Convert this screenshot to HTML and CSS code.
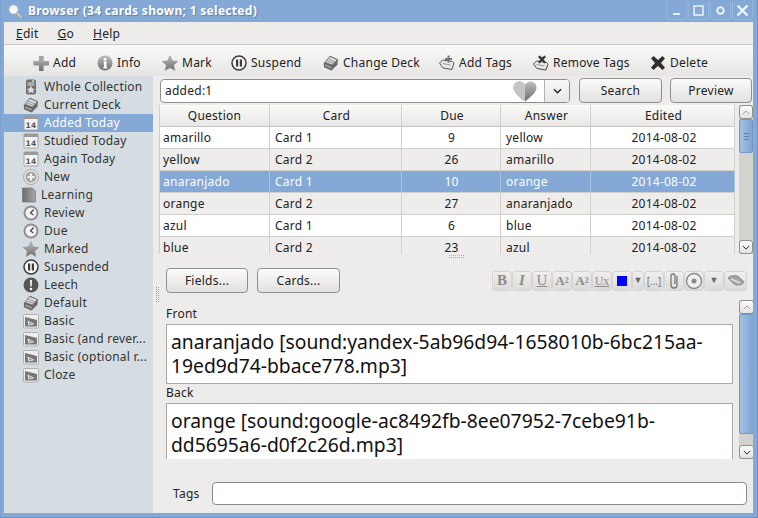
FILE: index.html
```html
<!DOCTYPE html>
<html lang="en">
<head>
<meta charset="utf-8">
<title>Browser</title>
<link rel="stylesheet" href="styles.css">
</head>
<body>
<svg class="defs" width="0" height="0">
  <defs>
    <linearGradient id="g1" x1="0" y1="0" x2="0" y2="1"><stop offset="0" stop-color="#bdbdbd"/><stop offset="1" stop-color="#6f6f6f"/></linearGradient>
    <linearGradient id="g2" x1="0" y1="0" x2="1" y2="0"><stop offset="0" stop-color="#6e6e6e"/><stop offset="1" stop-color="#a8a8a8"/></linearGradient>
    <symbol id="i-add" viewBox="0 0 16 16"><path d="M6 1h4.500v5H16v4.500h-5.500V16H6v-5.500H.5V6H6z" fill="url(#g1)"/><path d="M.5 6H6V1h4.500v5H16v1.500H.5z" fill="#a5a5a5"/></symbol>
    <symbol id="i-info" viewBox="0 0 16 16"><circle cx="8" cy="8" r="7.500" fill="url(#g1)"/><circle cx="8" cy="4.300" r="1.500" fill="#fff"/><path d="M6.500 6.500h3v6h1v1h-4.500v-1h1v-5h-.5z" fill="#fff"/></symbol>
    <symbol id="i-star" viewBox="0 0 16 16"><path d="M8 .8l2.300 5 5.500.6-4.100 3.700 1.200 5.400L8 12.700l-4.900 2.800 1.200-5.400L.2 6.400l5.500-.6z" fill="url(#g1)" stroke="#8c8c8c" stroke-width=".5"/></symbol>
    <symbol id="i-pause" viewBox="0 0 16 16"><circle cx="8" cy="8" r="7" fill="#f4f4f4" stroke="#3c3c3c" stroke-width="1.500"/><path d="M5 4.500h2.200v7H5zM8.800 4.500H11v7H8.800z" fill="#3c3c3c"/></symbol>
    <symbol id="i-deck" viewBox="0 0 16 16"><path d="M7 .8l8 3.600-.6 5.400-6 5.600L1 12.200.8 8.500z" fill="#6a6a6a"/><path d="M7 1.500l7.500 3.200-5.200 5.400L1.800 7.200z" fill="#dcdcdc" stroke="#555" stroke-width=".6"/><path d="M1.800 8.500l7.500 3v3L1.500 11.500z" fill="#9a9a9a" stroke="#444" stroke-width=".5"/><path d="M4 6l7 2.500M5.500 4.300l7 2.700" stroke="#777" stroke-width=".7"/></symbol>
    <symbol id="i-addtag" viewBox="0 0 16 16"><path d="M.5 8l3-3 10 1.500 1.500 1.500-2 6.500-9-1.500z" fill="#e8e8e8" stroke="#5a5a5a"/><path d="M3.500 8.500l8 1.500" stroke="#9a9a9a"/><path d="M8.500 .5h2V3H13v2h-2.500v2.500h-2V5H6V3h2.500z" fill="#777"/></symbol>
    <symbol id="i-remtag" viewBox="0 0 16 16"><path d="M.5 9l3-3 10 1.500 1.500 1.500-2 6-9-1.500z" fill="#e8e8e8" stroke="#4a4a4a"/><path d="M3.500 9.500l8 1.500" stroke="#9a9a9a"/><path d="M6.500 0.500l2.500 2 2.500-2 1.500 1.500-2.500 2.500 2.500 2.500-1.500 1.500-2.500-2.500-2.500 2.500-1.500-1.500L7.500 4.500 5 2z" fill="#333"/></symbol>
    <symbol id="i-delete" viewBox="0 0 16 16"><path d="M1 3.500L3.500 1 8 5l4.500-4L15 3.500 11 8l4 4.500-2.500 2.500L8 11l-4.500 4L1 12.500 5 8z" fill="#2f2f2f"/></symbol>
    <symbol id="i-heart" viewBox="0 0 24 21"><path d="M12 20.500C6 15.500.5 11.500.5 6.500.5 2.800 3.200.5 6.500.5 9 .5 11 1.800 12 4c1-2.200 3-3.500 5.500-3.500 3.300 0 6 2.300 6 6 0 5-5.500 9-11.500 14z" fill="url(#g1)"/><path d="M12 20.500C6 15.500.5 11.500.5 6.500.5 2.800 3.200.5 6.500.5 9 .5 11 1.800 12 4z" fill="#c4c4c4"/></symbol>
    <symbol id="i-coll" viewBox="0 0 16 16"><rect x="3" y="0.500" width="10" height="15" rx="2" fill="#6f6f6f"/><rect x="4.500" y="3" width="7" height="4" fill="#aaa"/><path d="M8 7l1.500 2.500 2.500.4-1.800 1.800.5 2.600L8 13l-2.700 1.300.5-2.600L4 9.900l2.500-.4z" fill="#ddd"/><circle cx="10" cy="2" r="1" fill="#ddd"/></symbol>
    <symbol id="i-cal" viewBox="0 0 16 16"><rect x="1" y="1" width="14" height="14" rx="1" fill="#f3f3f3" stroke="#a0a0a0"/><rect x="1" y="1" width="14" height="3" fill="#9a9a9a"/><text x="8" y="12.800" class="caltext" text-anchor="middle">14</text></symbol>
    <symbol id="i-new" viewBox="0 0 16 16"><circle cx="8" cy="8" r="7.500" fill="#e6e6e6" stroke="#aaa"/><circle cx="8" cy="8" r="5.500" fill="#a8a8a8"/><path d="M7 4.500h2V7h2.500v2H9v2.500H7V9H4.500V7H7z" fill="#f4f4f4"/></symbol>
    <symbol id="i-learn" viewBox="0 0 14 16"><path d="M.5 1h10l3 3v11H.5z" fill="url(#g2)" stroke="#6a6a6a" stroke-width=".6"/></symbol>
    <symbol id="i-clock" viewBox="0 0 16 16"><circle cx="8" cy="8" r="7.500" fill="#8f8f8f"/><circle cx="8" cy="8" r="5.500" fill="#f2f2f2"/><path d="M10.500 4.500L7.500 8l3 2" fill="none" stroke="#444" stroke-width="1.200"/></symbol>
    <symbol id="i-leech" viewBox="0 0 16 16"><circle cx="8" cy="8" r="7.500" fill="#555"/><path d="M7 3h2l-.3 6.500H7.300z" fill="#f5f5f5"/><circle cx="8" cy="12" r="1.300" fill="#f5f5f5"/></symbol>
    <symbol id="i-note" viewBox="0 0 16 16"><rect x="0.500" y="1.500" width="15" height="13.500" rx="1" fill="#eee" stroke="#b0b0b0"/><path d="M2 4l12 3v6.500H2z" fill="#777"/><path d="M4.500 7.500l7 3.500-6 1.500z" fill="#eee"/><path d="M6 9.300l3 1.500-2.500.6z" fill="#777"/></symbol>
    <symbol id="i-clip" viewBox="0 0 20 20"><path d="M13 5v9a3 3 0 0 1-6 0V5a2 2 0 0 1 4 0v8" fill="none" stroke="#777" stroke-width="1.300"/></symbol>
    <symbol id="i-rec" viewBox="0 0 20 20"><circle cx="10" cy="10" r="7.500" fill="#f0f0f0" stroke="#8a8a8a" stroke-width="1.400"/><circle cx="10" cy="10" r="2.500" fill="#8a8a8a"/></symbol>
    <symbol id="i-chem" viewBox="0 0 20 20"><path d="M2 7c3-3 8-3 11-1l5 5c-1 3-6 4-10 2z" fill="#a5a5a5" stroke="#8a8a8a"/><path d="M5 8l9 4" stroke="#e0e0e0" stroke-width="1.500"/></symbol>
  </defs>
</svg>

<div class="window">
  <header class="titlebar">
    <svg class="title-icon" viewBox="0 0 14 14"><circle cx="5.500" cy="5.500" r="4.500" fill="#f4f6f8" stroke="#b9c2cc"/><path d="M9 9l4.500 4.500" stroke="#e7c27a" stroke-width="2"/></svg>
    <span class="title-text">Browser (34 cards shown; 1 selected)</span>
    <div class="wm-buttons">
      <span class="wm-btn"><svg viewBox="0 0 21 21"><rect x="7" y="13" width="7" height="2" fill="#e8eef6"/></svg></span>
      <span class="wm-btn"><svg viewBox="0 0 21 21"><rect x="6" y="6" width="9" height="9" fill="none" stroke="#eef3f9" stroke-width="1.500"/></svg></span>
      <span class="wm-btn"><svg viewBox="0 0 21 21"><circle cx="10.500" cy="10.500" r="3.300" fill="none" stroke="#eef3f9" stroke-width="2"/></svg></span>
      <span class="wm-btn"><svg viewBox="0 0 21 21"><path d="M5.500 5.500l10 10M15.500 5.500l-10 10" stroke="#f2f5fa" stroke-width="2.400"/></svg></span>
    </div>
  </header>

  <nav class="menubar">
    <span class="menu"><u>E</u>dit</span>
    <span class="menu"><u>G</u>o</span>
    <span class="menu"><u>H</u>elp</span>
  </nav>

  <div class="toolbar">
    <span class="tool tool-add"><svg class="ico"><use href="#i-add"/></svg>Add</span>
    <span class="tool tool-info"><svg class="ico"><use href="#i-info"/></svg>Info</span>
    <span class="tool tool-mark"><svg class="ico"><use href="#i-star"/></svg>Mark</span>
    <span class="tool tool-susp"><svg class="ico"><use href="#i-pause"/></svg>Suspend</span>
    <span class="tool tool-deck"><svg class="ico"><use href="#i-deck"/></svg>Change Deck</span>
    <span class="tool tool-addt"><svg class="ico"><use href="#i-addtag"/></svg>Add Tags</span>
    <span class="tool tool-remt"><svg class="ico"><use href="#i-remtag"/></svg>Remove Tags</span>
    <span class="tool tool-del"><svg class="ico"><use href="#i-delete"/></svg>Delete</span>
  </div>

  <div class="content">
    <aside class="sidebar">
      <div class="side-item"><svg class="ico"><use href="#i-coll"/></svg>Whole Collection</div>
      <div class="side-item"><svg class="ico"><use href="#i-deck"/></svg>Current Deck</div>
      <div class="side-item is-selected"><svg class="ico"><use href="#i-cal"/></svg>Added Today</div>
      <div class="side-item"><svg class="ico"><use href="#i-cal"/></svg>Studied Today</div>
      <div class="side-item"><svg class="ico"><use href="#i-cal"/></svg>Again Today</div>
      <div class="side-item"><svg class="ico"><use href="#i-new"/></svg>New</div>
      <div class="side-item side-narrow"><svg class="ico ico-narrow"><use href="#i-learn"/></svg>Learning</div>
      <div class="side-item"><svg class="ico"><use href="#i-clock"/></svg>Review</div>
      <div class="side-item"><svg class="ico"><use href="#i-clock"/></svg>Due</div>
      <div class="side-item"><svg class="ico"><use href="#i-star"/></svg>Marked</div>
      <div class="side-item"><svg class="ico"><use href="#i-pause"/></svg>Suspended</div>
      <div class="side-item"><svg class="ico"><use href="#i-leech"/></svg>Leech</div>
      <div class="side-item"><svg class="ico"><use href="#i-deck"/></svg>Default</div>
      <div class="side-item"><svg class="ico"><use href="#i-note"/></svg>Basic</div>
      <div class="side-item"><svg class="ico"><use href="#i-note"/></svg>Basic (and rever...</div>
      <div class="side-item"><svg class="ico"><use href="#i-note"/></svg>Basic (optional r...</div>
      <div class="side-item"><svg class="ico"><use href="#i-note"/></svg>Cloze</div>
    </aside>

    <main class="main">
      <div class="grip-v"></div>
      <div class="search-row">
        <div class="combo">
          <span class="combo-text">added:1</span>
          <svg class="heart"><use href="#i-heart"/></svg>
          <span class="combo-arrow"><svg viewBox="0 0 10 6" class="chev"><path d="M1 1l4 4 4-4" fill="none" stroke="#222" stroke-width="1.500"/></svg></span>
        </div>
        <button class="btn btn-search">Search</button>
        <button class="btn btn-preview">Preview</button>
      </div>

      <div class="table-wrap">
        <div class="table">
          <div class="row head"><span>Question</span><span>Card</span><span>Due</span><span>Answer</span><span>Edited</span></div>
          <div class="row"><span>amarillo</span><span>Card 1</span><span>9</span><span>yellow</span><span>2014-08-02</span></div>
          <div class="row alt"><span>yellow</span><span>Card 2</span><span>26</span><span>amarillo</span><span>2014-08-02</span></div>
          <div class="row sel"><span>anaranjado</span><span>Card 1</span><span>10</span><span>orange</span><span>2014-08-02</span></div>
          <div class="row alt"><span>orange</span><span>Card 2</span><span>27</span><span>anaranjado</span><span>2014-08-02</span></div>
          <div class="row"><span>azul</span><span>Card 1</span><span>6</span><span>blue</span><span>2014-08-02</span></div>
          <div class="row alt"><span>blue</span><span>Card 2</span><span>23</span><span>azul</span><span>2014-08-02</span></div>
        </div>
        <div class="scrollbar sb-table">
          <span class="sb-btn"><svg viewBox="0 0 10 6" class="sb-chev"><path d="M1 5l4-4 4 4" fill="none" stroke="#9a9a9a" stroke-width="1.200"/></svg></span>
          <span class="thumb thumb-table"><i></i><i></i><i></i></span>
          <span class="sb-track"></span>
          <span class="sb-btn"><svg viewBox="0 0 10 6" class="sb-chev"><path d="M1 1l4 4 4-4" fill="none" stroke="#222" stroke-width="1.200"/></svg></span>
        </div>
      </div>

      <div class="grip-h"><i></i></div>

      <div class="buttons-row">
        <button class="btn btn-fields">Fields...</button>
        <button class="btn btn-cards">Cards...</button>
        <div class="edit-tools">
          <span class="et et-b">B</span>
          <span class="et et-i">I</span>
          <span class="et et-u">U</span>
          <span class="et et-s">A<sup>2</sup></span>
          <span class="et et-s">A<sub>2</sub></span>
          <span class="et et-ux"><u>Ux</u></span>
          <span class="et"><b class="swatch"></b></span>
          <span class="et et-arrow">▼</span>
          <span class="et et-cl">[...]</span>
          <span class="et"><svg class="et-ico"><use href="#i-clip"/></svg></span>
          <span class="et"><svg class="et-ico"><use href="#i-rec"/></svg></span>
          <span class="et et-arrow2">▼</span>
          <span class="et et-last"><svg class="et-ico"><use href="#i-chem"/></svg></span>
        </div>
      </div>

      <div class="editor">
        <div class="fields">
          <div class="field-label">Front</div>
          <div class="field-box">anaranjado [sound:yandex-5ab96d94-1658010b-6bc215aa-19ed9d74-bbace778.mp3]</div>
          <div class="field-label back-label">Back</div>
          <div class="field-box">orange [sound:google-ac8492fb-8ee07952-7cebe91b-dd5695a6-d0f2c26d.mp3]</div>
        </div>
        <div class="scrollbar sb-editor">
          <span class="sb-btn"><svg viewBox="0 0 10 6" class="sb-chev"><path d="M1 5l4-4 4 4" fill="none" stroke="#9a9a9a" stroke-width="1.200"/></svg></span>
          <span class="thumb thumb-editor"><i></i><i></i><i></i></span>
          <span class="sb-track"></span>
          <span class="sb-btn"><svg viewBox="0 0 10 6" class="sb-chev"><path d="M1 1l4 4 4-4" fill="none" stroke="#222" stroke-width="1.200"/></svg></span>
        </div>
      </div>

      <div class="tags-row">
        <span class="tags-label">Tags</span>
        <span class="tags-input"></span>
      </div>
    </main>
  </div>
</div>
</body>
</html>
```

FILE: styles.css
```css
* { box-sizing: border-box; }
html, body { margin: 0; padding: 0; }
body { width: 758px; height: 518px; overflow: hidden; font: 12px/16px "Noto Sans", sans-serif; letter-spacing: .25px; color: #222; background: #84a9d6; }
.defs { position: absolute; }
.caltext { font: bold 7.500px "DejaVu Sans", sans-serif; fill: #555; }

.window { width: 758px; height: 518px; display: flex; flex-direction: column; background: #84a9d6; padding: 0 4px 4px; border: 1px solid #6f93c0; border-top: 0; border-left-color: #7ea2cf; }
.titlebar { height: 22px; flex: none; display: flex; align-items: center; margin: 0 -3px; padding-left: 6px; }
.title-icon { width: 14px; height: 14px; flex: none; }
.title-text { margin-left: 6px; color: #fff; font-weight: bold; text-shadow: 1px 1px 1px #5f7fa8; letter-spacing: .3px; }
.wm-buttons { margin-left: auto; margin-right: 3px; display: flex; gap: 1px; }
.wm-btn { width: 21px; height: 18px; border: 1px solid #94b5dd; border-top: 0; border-radius: 0 0 3px 3px; display: flex; align-items: center; justify-content: center; }
.wm-btn svg { width: 21px; height: 21px; flex: none; }

.menubar { height: 23px; flex: none; display: flex; align-items: center; gap: 19px; padding: 1px 0 0 12px; margin-left: -1px; background: #edecea; border-bottom: 1px solid #cbcac6; }
.toolbar { height: 31px; flex: none; display: flex; align-items: center; padding: 4px 0 0 29px; margin-left: -1px; background: linear-gradient(#fafaf9, #e6e5e3); }
.tool { display: flex; align-items: center; gap: 4px; width: 64px; }
.tool-info { width: 65px; }
.tool-mark { width: 69px; }
.tool-susp { width: 92px; }
.tool-deck { width: 116px; }
.tool-addt { width: 94px; }
.tool-remt { width: 117px; }
.ico { width: 16px; height: 16px; flex: none; }

.content { flex: 1; min-height: 0; display: flex; margin-left: -1px; }
.sidebar { width: 149px; flex: none; background: #d6dde2; padding-top: 2px; }
.side-item { height: 18px; display: flex; align-items: center; gap: 5px; padding-left: 19px; white-space: nowrap; color: #333; }
.side-item.is-selected { background: #84a9d6; color: #fff; }
.side-item.side-narrow { padding-left: 18px; gap: 5px; }
.ico-narrow { width: 14px; }

.main { flex: 1; min-width: 0; background: #edecea; position: relative; display: flex; flex-direction: column; }
.grip-v { position: absolute; left: 2px; top: 211px; width: 4px; height: 16px; background: conic-gradient(#a0a09c 25%, transparent 0) 0 0 / 2px 2px; }
.search-row { display: flex; margin-top: 2px; padding-left: 7px; height: 25px; flex: none; }
.combo { width: 410px; height: 24px; margin-top: 1px; flex: none; display: flex; align-items: center; background: #fff; border: 1px solid #8f8f8b; border-radius: 4px; padding-left: 4px; }
.combo-text { flex: 1; }
.heart { width: 24px; height: 21px; flex: none; margin-right: 7px; }
.combo-arrow { width: 25px; align-self: stretch; display: flex; align-items: center; justify-content: center; border-left: 1px solid #b0b0ac; background: linear-gradient(#f8f8f7, #e8e7e5); border-radius: 0 3px 3px 0; }
.chev { width: 9px; height: 6px; }
.btn { font: inherit; letter-spacing: inherit; color: #222; background: linear-gradient(#fbfbfa, #e2e1df); border: 1px solid #8f8f8b; border-radius: 4px; padding: 0; height: 25px; flex: none; }
.btn-search { width: 83px; margin-left: 9px; }
.btn-preview { width: 82px; margin-left: 8px; }

.table-wrap { display: flex; height: 149px; flex: none; margin-top: 2px; padding-left: 6px; gap: 4px; }
.table { width: 576px; overflow: hidden; flex: none; border-left: 1px solid #d0cfcb; }
.row { display: grid; grid-template-columns: 110px 132px 99px 90px 144px; height: 22px; background: #fff; border-bottom: 1px solid #d0cfcb; }
.row span { display: flex; align-items: center; padding-left: 5px; border-right: 1px solid #d0cfcb; white-space: nowrap; }
.row span:first-child { padding-left: 3px; }
.row span:nth-child(3) { justify-content: center; padding: 0 0 0 1px; }
.row span:nth-child(5) { justify-content: center; padding: 0 0 0 3px; }
.row.head { height: 22px; background: linear-gradient(#fafaf9, #e8e7e5); border-bottom: 1px solid #c4c3bf; }
.row.head span { justify-content: center; padding: 0 0 0 2px; }
.row.head span:first-child { padding: 0; }
.row.alt { background: #eeedeb; }
.row.sel { background: #84a9d6; color: #fff; }
.row.sel span { border-right-color: #a9c3e3; }

.scrollbar { display: flex; flex-direction: column; flex: none; background: #d3d2ce; }
.sb-table { width: 14px; }
.sb-editor { width: 15px; }
.sb-btn { height: 14px; flex: none; background: linear-gradient(#fbfbfa, #e4e3e1); border: 1px solid #8f8f8b; border-radius: 3px; display: flex; align-items: center; justify-content: center; }
.sb-chev { width: 8px; height: 5px; }
.thumb { flex: none; background: linear-gradient(90deg, #a5c1e4, #7fa5d4); border: 1px solid #7598c6; border-radius: 2px; display: flex; flex-direction: column; align-items: center; justify-content: center; gap: 2px; }
.thumb i { width: 5px; height: 1px; background: #5b7faf; }
.thumb-table { height: 34px; }
.thumb-editor { height: 120px; }
.thumb-editor i { background: #9dbbe0; }
.sb-track { flex: 1; }

.grip-h { height: 14px; flex: none; display: flex; justify-content: center; padding: 1px 0 0 0; margin-left: 6px; }
.grip-h i { width: 16px; height: 4px; background: conic-gradient(#b0b0ac 25%, transparent 0) 0 0 / 2px 2px; }

.buttons-row { display: flex; align-items: center; height: 25px; flex: none; padding-left: 13px; }
.btn-fields { width: 82px; }
.btn-cards { width: 83px; margin-left: 9px; }
.edit-tools { margin-left: auto; margin-right: 6px; display: flex; height: 20px; letter-spacing: 0; }
.et { width: 20px; height: 20px; display: flex; align-items: center; justify-content: center; background: linear-gradient(#efeeec, #dcdbd9); border: 1px solid #d6d5d1; border-radius: 3px; color: #8c8c8c; font: 12px/1 "Liberation Serif", serif; overflow: hidden; }
.et-b { font-weight: bold; font-size: 15px; }
.et-i { font-style: italic; font-weight: bold; font-size: 15px; }
.et-u { text-decoration: underline; font-size: 15px; }
.et-ux { font-size: 12px; }
.et-s { font-weight: bold; font-size: 13px; }
.et-s sup, .et-s sub { font-size: 8px; line-height: 0; }
.swatch { display: block; width: 10px; height: 10px; background: #0000ff; }
.et-arrow { width: 12px; font-size: 9px; color: #666; }
.et-arrow2 { font-size: 9px; color: #666; }
.et-cl { font: 10px/1 "Noto Sans", sans-serif; color: #777; }
.et-ico { width: 20px; height: 20px; flex: none; }
.et-last { width: 23px; }

.editor { display: flex; height: 159px; flex: none; margin-top: 7px; padding-left: 13px; gap: 6px; overflow: hidden; }
.fields { width: 567px; flex: none; overflow: hidden; padding-top: 6px; }
.field-label { height: 18px; line-height: 16px; }
.back-label { height: 19px; padding-top: 1px; }
.field-box { background: #fff; border: 1px solid #a9a9a6; padding: 5px 4px 0; font-size: 19.300px; letter-spacing: 0; line-height: 24px; height: 60px; color: #111; overflow-wrap: anywhere; }
.tags-row { display: flex; align-items: center; height: 23px; flex: none; margin-top: 23px; padding-left: 20px; }
.tags-label { width: 39px; }
.tags-input { width: 535px; height: 23px; background: #fff; border: 1px solid #8a8a86; border-radius: 4px; }
```
